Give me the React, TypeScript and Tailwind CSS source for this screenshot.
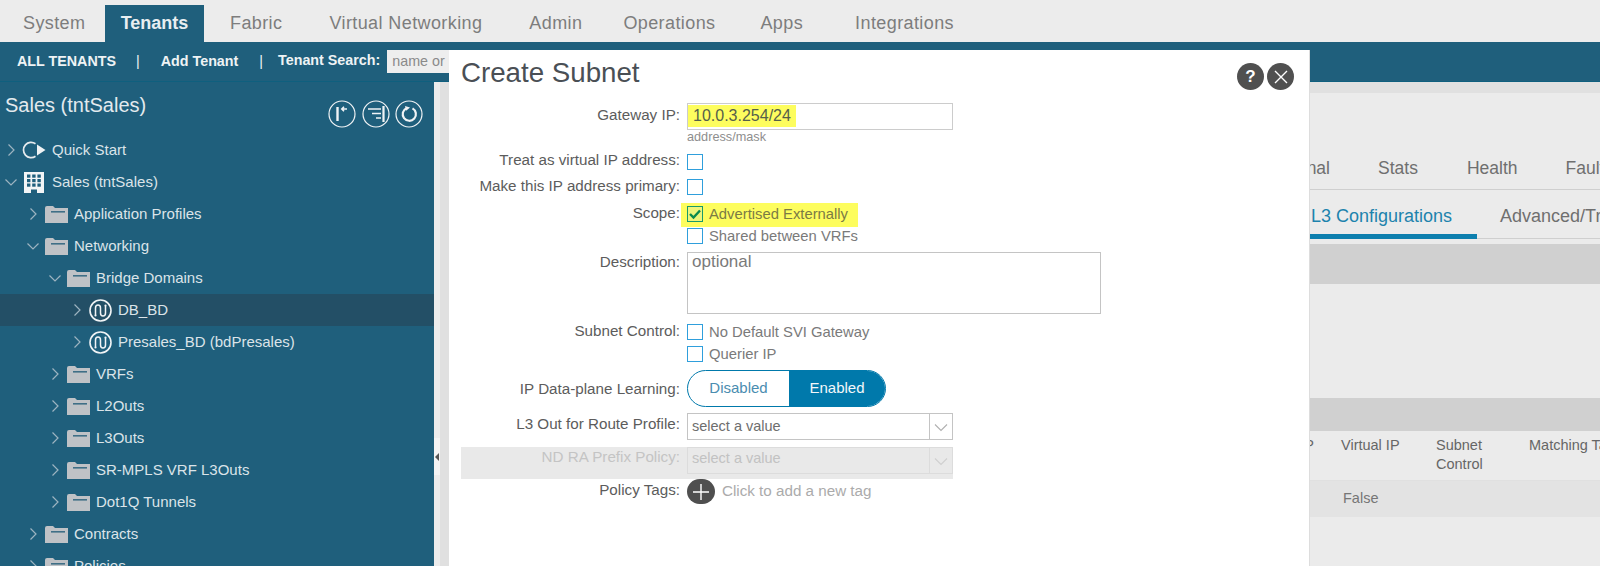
import React from "react";

const Chevron = ({ open }: { open: boolean }) => (
  <svg width="14" height="14" viewBox="0 0 14 14" fill="none" stroke="#9db4c1" strokeWidth="1.2">
    {open ? <polyline points="1.5,4.5 7,10 12.5,4.5" /> : <polyline points="4.5,1.5 10,7 4.5,12.5" />}
  </svg>
);

const Folder = () => (
  <svg width="23" height="17" viewBox="0 0 23 17" className="ml-[5px]">
    <path d="M0 2 Q0 0 2 0 H8 L10 2 H23 V17 H0 Z" fill="#bfc2c6" />
    <rect x="6" y="5" width="14" height="1.6" fill="#3f6f87" />
  </svg>
);

const BridgeIcon = () => (
  <svg width="23" height="23" viewBox="0 0 23 23" fill="none" stroke="#f1f4f6" className="ml-[5px]">
    <circle cx="11.5" cy="11.5" r="10.5" strokeWidth="1.6" />
    <path d="M6.5 16 V9 Q6.5 6 9 6 Q11.5 6 11.5 9 V14 Q11.5 17 14 17 Q16.5 17 16.5 14 V7" strokeWidth="1.5" />
    <circle cx="6.5" cy="16.5" r="1.1" fill="#f1f4f6" stroke="none" />
    <circle cx="16.5" cy="6.5" r="1.1" fill="#f1f4f6" stroke="none" />
  </svg>
);

const QuickIcon = () => (
  <svg width="26" height="18" viewBox="0 0 26 18" fill="none" className="ml-[4px]">
    <path d="M13.5 2.8 A7.6 7.6 0 1 0 13.5 15.2" stroke="#e6ebee" strokeWidth="1.7" />
    <path d="M15 3.5 L23.5 9 L15 14.5 Z" fill="#eef2f4" />
  </svg>
);

const BuildingIcon = () => (
  <svg width="20" height="21" viewBox="0 0 20 21" className="ml-[6px]">
    <path d="M0 0 H20 V21 H13 V17.5 H7 V21 H0 Z" fill="#f3f5f6" />
    {[2.5, 7, 11.5].map((y) =>
      [3, 8.2, 13.4].map((x) => <rect key={`${x}-${y}`} x={x} y={y} width="3.4" height="3.2" fill="#1f5f7c" />)
    )}
  </svg>
);

const pads = ["pl-[4px]", "pl-[26px]", "pl-[48px]", "pl-[70px]"];

const TreeRow = ({ depth, open, icon, label, active }: { depth: number; open: boolean; icon: React.ReactNode; label: string; active?: boolean }) => (
  <div className={`flex h-[32px] shrink-0 items-center ${pads[depth]} ${active ? "bg-[#234f66]" : ""}`}>
    <span className="flex w-[14px] shrink-0 justify-center">
      <Chevron open={open} />
    </span>
    <span className="flex w-[34px] shrink-0 items-center">{icon}</span>
    <span className="whitespace-nowrap text-[15px] text-[#dbe4e9]">{label}</span>
  </div>
);

const ActionIcon = ({ children }: { children: React.ReactNode }) => (
  <svg width="28" height="28" viewBox="0 0 28 28" fill="none" stroke="#f0f3f5">
    <circle cx="14" cy="14" r="13" strokeWidth="1.2" />
    {children}
  </svg>
);

const Check = ({ checked }: { checked?: boolean }) => (
  <span className={`flex h-4 w-4 shrink-0 items-center justify-center border-[1.5px] ${checked ? "border-[#1a9a6a] bg-[#eef57a]" : "border-[#2f9fdc] bg-white"}`}>
    {checked && (
      <svg width="14" height="14" viewBox="0 0 14 14" fill="none" stroke="#0c8a4d" strokeWidth="2.4">
        <polyline points="2,7 5.5,10.5 12,3.5" />
      </svg>
    )}
  </span>
);

const Row = ({ label, children, className = "", labelClass = "", muted }: { label: string; children: React.ReactNode; className?: string; labelClass?: string; muted?: boolean }) => (
  <div className={`flex gap-[7px] ${className}`}>
    <div className={`w-[219px] shrink-0 whitespace-nowrap text-right text-[15.2px] leading-[14px] ${muted ? "text-[#c4c4c4]" : "text-[#5c5c5c]"} ${labelClass}`}>{label}</div>
    {children}
  </div>
);

const Select = ({ muted }: { muted?: boolean }) => (
  <div className={`flex h-[27px] w-[266px] items-center border ${muted ? "border-[#dcdcdc]" : "border-[#c4c4c4] bg-white"}`}>
    <span className={`flex-1 pl-[4px] text-[14.5px] ${muted ? "pb-[3px] text-[#c2c2c2]" : "text-[#6e6e6e]"}`}>select a value</span>
    <span className={`flex h-full w-[23px] items-center justify-center border-l ${muted ? "border-[#dcdcdc]" : "border-[#c4c4c4]"}`}>
      <svg width="14" height="14" viewBox="0 0 14 14" fill="none" stroke={muted ? "#cfcfcf" : "#b0b0b0"} strokeWidth="1.1">
        <polyline points="1,4.5 7,10.5 13,4.5" />
      </svg>
    </span>
  </div>
);

const navItems = [
  { t: "Fabric", c: "ml-[26px]" },
  { t: "Virtual Networking", c: "ml-[47px]" },
  { t: "Admin", c: "ml-[47px]" },
  { t: "Operations", c: "ml-[41px]" },
  { t: "Apps", c: "ml-[45px]" },
  { t: "Integrations", c: "ml-[52px]" },
];

export default function App() {
  return (
    <div className="relative h-[566px] w-[1600px] overflow-hidden bg-[#ebebeb] font-['Liberation_Sans',Arial,sans-serif]">
      <nav className="flex h-[42px] items-end bg-[#ececec] pl-[23px] text-[18px] tracking-[0.4px] text-[#7d7d7d]">
        <span className="h-[37px] w-[82px] leading-[36px]">System</span>
        <span className="h-[37px] w-[99px] bg-[#1f5f7c] text-center font-semibold leading-[36px] tracking-normal text-[#e8eef1]">Tenants</span>
        {navItems.map((n) => (
          <span key={n.t} className={`h-[37px] leading-[36px] ${n.c}`}>{n.t}</span>
        ))}
      </nav>

      <div className="flex h-[40px] items-center border-b border-[#0f5f7e] bg-[#1f5f7c] pl-[17px] text-[14.3px] font-bold text-[#eef3f5]">
        <span>ALL TENANTS</span>
        <span className="ml-[20px] font-normal">|</span>
        <span className="ml-[21px]">Add Tenant</span>
        <span className="ml-[21px] font-normal">|</span>
        <span className="-mt-[2px] ml-[15px]">Tenant Search:</span>
        <span className="ml-[7px] flex h-[23px] w-[70px] items-center whitespace-nowrap bg-[#eeeeee] pl-[5px] font-normal text-[#8a8a8a]">name or</span>
      </div>

      <div className="flex h-[484px]">
        <aside className="flex w-[434px] shrink-0 flex-col overflow-hidden bg-[#1f5f7c]">
          <div className="flex h-[52px] shrink-0 items-start justify-between pl-[5px] pr-[11px]">
            <span className="mt-[11px] text-[20px] leading-[24px] text-[#e3eaee]">Sales (tntSales)</span>
            <div className="mt-[18px] flex gap-[5.5px]">
              <ActionIcon>
                <path d="M9.5 7 V21" strokeWidth="2.4" />
                <path d="M14 9 H19 M16 6.8 L13.8 9 L16 11.2" strokeWidth="1.6" />
              </ActionIcon>
              <ActionIcon>
                <path d="M6 9 H19 M10 13.5 H19 M14 18 H19" strokeWidth="1.6" />
                <path d="M21.5 6 V22" strokeWidth="2.2" />
              </ActionIcon>
              <ActionIcon>
                <path d="M11.5 8.2 A6.6 6.6 0 1 0 17.5 8.4" strokeWidth="2.2" />
                <path d="M10 6 L15 7.6 L11.2 10.8 Z" fill="#f0f3f5" stroke="none" />
              </ActionIcon>
            </div>
          </div>
          <TreeRow depth={0} open={false} icon={<QuickIcon />} label="Quick Start" />
          <TreeRow depth={0} open icon={<BuildingIcon />} label="Sales (tntSales)" />
          <TreeRow depth={1} open={false} icon={<Folder />} label="Application Profiles" />
          <TreeRow depth={1} open icon={<Folder />} label="Networking" />
          <TreeRow depth={2} open icon={<Folder />} label="Bridge Domains" />
          <TreeRow depth={3} open={false} icon={<BridgeIcon />} label="DB_BD" active />
          <TreeRow depth={3} open={false} icon={<BridgeIcon />} label="Presales_BD (bdPresales)" />
          <TreeRow depth={2} open={false} icon={<Folder />} label="VRFs" />
          <TreeRow depth={2} open={false} icon={<Folder />} label="L2Outs" />
          <TreeRow depth={2} open={false} icon={<Folder />} label="L3Outs" />
          <TreeRow depth={2} open={false} icon={<Folder />} label="SR-MPLS VRF L3Outs" />
          <TreeRow depth={2} open={false} icon={<Folder />} label="Dot1Q Tunnels" />
          <TreeRow depth={1} open={false} icon={<Folder />} label="Contracts" />
          <TreeRow depth={1} open={false} icon={<Folder />} label="Policies" />
        </aside>

        <div className="flex w-[6px] shrink-0 flex-col items-center bg-[#ececec] pt-[356px]">
          <span className="flex h-[37px] w-[6px] items-center justify-center bg-[#f4f4f4]">
            <span className="border-y-[4px] border-r-[4px] border-y-transparent border-r-[#555555]" />
          </span>
        </div>
        <div className="w-[9px] shrink-0 bg-[#e0e0e0]" />

        <main className="flex min-w-0 flex-1 flex-col">
          <div className="h-[11px] shrink-0 bg-[#e0e0e0]" />
          <div className="flex h-[97px] shrink-0 items-end whitespace-nowrap border-b border-[#cfcfcf] pb-[8px] text-[17.5px] text-[#6f6f6f]">
            <span className="w-[881px] shrink-0 text-right">Operational</span>
            <span className="ml-[48px] shrink-0">Stats</span>
            <span className="ml-[49px] shrink-0">Health</span>
            <span className="ml-[48px] shrink-0">Faults</span>
          </div>
          <div className="flex h-[49px] shrink-0 items-start whitespace-nowrap border-b border-[#cfcfcf] pt-[13px] text-[18px] text-[#6f6f6f]">
            <span className="h-[36px] w-[1028px] shrink-0 border-b-[5px] border-[#0d7fae] pr-[25px] text-right text-[#1d83ad]">L3 Configurations</span>
            <span className="ml-[23px] shrink-0">Advanced/Troubleshooting</span>
          </div>
          <div className="mt-[5px] h-[40px] shrink-0 bg-[#d0d0d0]" />
          <div className="h-[114px] shrink-0" />
          <div className="h-[33px] shrink-0 bg-[#d0d0d0]" />
          <div className="grid h-[50px] shrink-0 grid-cols-[892px_95px_93px_1fr] whitespace-nowrap border-b border-[#e0e0e0] pt-[5px] text-[14.5px] leading-[19px] text-[#666666]">
            <span className="pr-[27px] text-right">IP</span>
            <span>Virtual IP</span>
            <span>Subnet<br />Control</span>
            <span>Matching Tags</span>
          </div>
          <div className="grid h-[36px] shrink-0 grid-cols-[892px_1fr] items-center bg-[#e3e3e3] text-[14.5px] text-[#767676]">
            <span />
            <span className="pl-[2px]">False</span>
          </div>
        </main>
      </div>

      {/* Modal dialog */}
      <div className="absolute left-[449px] top-[50px] h-[516px] w-[861px] border-r border-[#dddddd] bg-white">
        <div className="flex h-[53px] items-start justify-between pl-[12px] pr-[15px]">
          <h1 className="mt-[6px] text-[27.7px] leading-[34px] text-[#4a4f55]">Create Subnet</h1>
          <div className="mt-[13px] flex gap-[3px]">
            <span className="flex h-[27px] w-[27px] items-center justify-center rounded-full bg-[#505050] text-[17px] font-bold text-white">?</span>
            <span className="flex h-[27px] w-[27px] items-center justify-center rounded-full bg-[#505050]">
              <svg width="16" height="16" viewBox="0 0 16 16" stroke="#ffffff" strokeWidth="1.4">
                <path d="M2 2 L14 14 M14 2 L2 14" />
              </svg>
            </span>
          </div>
        </div>

        <div className="flex flex-col pl-[12px]">
          <Row label="Gateway IP:" className="h-[45px]" labelClass="pt-[5px]">
            <div className="flex flex-col">
              <div className="flex h-[27px] w-[266px] border border-[#cccccc]">
                <span className="mt-[1px] h-[22px] w-[108px] bg-[#fdfd5e] pl-[5px] text-[16px] leading-[22px] text-[#55604a]">10.0.3.254/24</span>
              </div>
              <span className="-mt-[1px] text-[12.7px] leading-[16px] text-[#8e8e8e]">address/mask</span>
            </div>
          </Row>
          <Row label="Treat as virtual IP address:" className="mt-[6px] h-[16px]" labelClass="-mt-[1px]"><Check /></Row>
          <Row label="Make this IP address primary:" className="mt-[9px] h-[16px]"><Check /></Row>
          <Row label="Scope:" className="mt-[11px]">
            <div className="flex flex-col gap-[6px]">
              <div className="-mx-[6px] -mb-[5px] -mt-[3px] h-[24px] w-[177px] bg-[#fdfd5e] pl-[6px] pt-[3px]">
                <div className="flex h-4 items-center gap-[6px] text-[14.8px] text-[#7b7b45]">
                  <Check checked />
                  <span className="whitespace-nowrap">Advertised Externally</span>
                </div>
              </div>
              <div className="flex h-4 items-center gap-[6px] text-[14.8px] text-[#7a7a7a]">
                <Check />
                <span className="whitespace-nowrap">Shared between VRFs</span>
              </div>
            </div>
          </Row>
          <Row label="Description:" className="mt-[8px]" labelClass="pt-[3px]">
            <div className="h-[62px] w-[414px] border border-[#c4c4c4] pl-[4px] text-[17px] leading-[17px] text-[#7a7a7a]">optional</div>
          </Row>
          <Row label="Subnet Control:" className="mt-[10px]">
            <div className="flex flex-col gap-[6px]">
              <div className="flex h-4 items-center gap-[6px] text-[14.8px] text-[#7a7a7a]">
                <Check />
                <span className="whitespace-nowrap">No Default SVI Gateway</span>
              </div>
              <div className="flex h-4 items-center gap-[6px] text-[14.8px] text-[#7a7a7a]">
                <Check />
                <span className="whitespace-nowrap">Querier IP</span>
              </div>
            </div>
          </Row>
          <Row label="IP Data-plane Learning:" className="mt-[8px] h-[37px] items-center">
            <div className="flex h-[37px] w-[199px] overflow-hidden rounded-full border border-[#0079ab] text-[15px]">
              <span className="flex w-[101px] items-center justify-center text-[#4a8db0]">Disabled</span>
              <span className="flex flex-1 items-center justify-center bg-[#0079ab] text-[#f2f7fa]">Enabled</span>
            </div>
          </Row>
          <Row label="L3 Out for Route Profile:" className="mt-[6px] h-[27px]" labelClass="pt-[4px]"><Select /></Row>
          <Row label="ND RA Prefix Policy:" muted className="mt-[7px] h-[32px] w-[492px] bg-[#e9e9e9]" labelClass="pt-[3px]"><Select muted /></Row>
          <Row label="Policy Tags:" className="h-[25px]" labelClass="pt-[4px]">
            <div className="flex items-center gap-[7px]">
              <span className="flex h-[25px] w-[28px] items-center justify-center rounded-full bg-[#4f4f4f]">
                <svg width="18" height="18" viewBox="0 0 18 18" stroke="#ffffff" strokeWidth="1.4">
                  <path d="M9 1 V17 M1 9 H17" />
                </svg>
              </span>
              <span className="whitespace-nowrap text-[15.2px] text-[#ababab]">Click to add a new tag</span>
            </div>
          </Row>
        </div>
      </div>
    </div>
  );
}
